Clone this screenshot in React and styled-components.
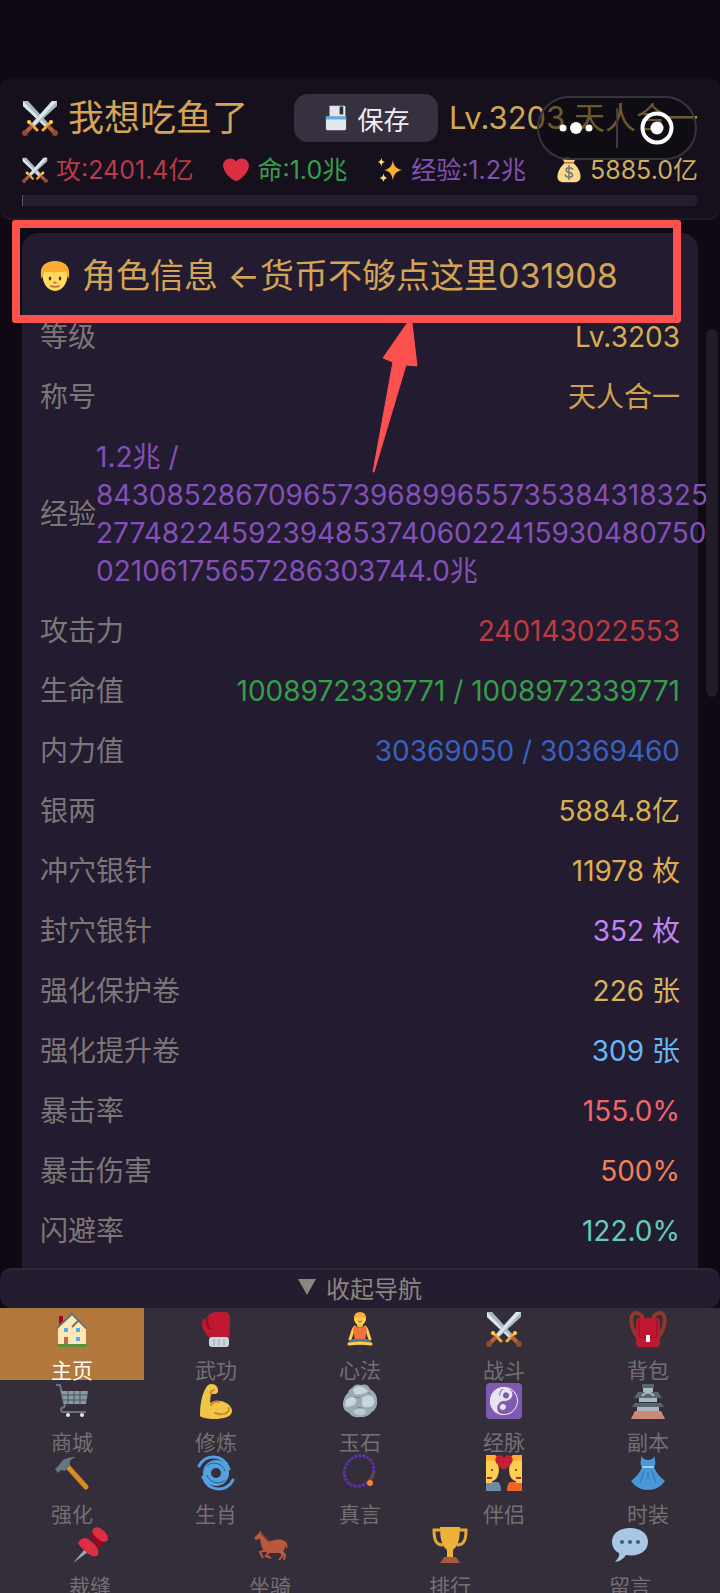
import React from 'react';
import styled, { createGlobalStyle } from 'styled-components';

const GlobalStyle = createGlobalStyle`
  * {
    box-sizing: border-box;
  }

  body {
    margin: 0;
    background: #0f0913;
    font-family: Inter, 'Noto Sans CJK SC', sans-serif;
    font-weight: 400;
  }

  h1, h2, p, dl, dd, dt {
    margin: 0;
    font-weight: 400;
  }

  button {
    font-family: inherit;
    border: none;
    padding: 0;
    cursor: pointer;
  }
`;

const Swords = () => (
  <>
    <path d="M1 1h5l21 23-3 3L1 6z" fill="#a9bac5" />
    <path d="M1 1l24 25-2 1L1 6z" fill="#dce6ec" />
    <path d="M35 1h-5L9 24l3 3L35 6z" fill="#a9bac5" />
    <path d="M35 1L12 26l-2-2L30 1z" fill="#dce6ec" />
    <path d="M7 22l8 8M29 22L21 30" stroke="#f2a93b" strokeWidth="3" strokeLinecap="round" />
    <path d="M10 26l-6 6M26 26l6 6" stroke="#b5603b" strokeWidth="4" />
    <circle cx="3" cy="33" r="3" fill="#8f4a32" />
    <circle cx="33" cy="33" r="3" fill="#8f4a32" />
    <circle cx="7" cy="22" r="2" fill="#ffcc4d" />
    <circle cx="29" cy="22" r="2" fill="#ffcc4d" />
  </>
);

const Heart = () => (
  <path
    d="M35.9 11.8C35.9 6.4 31.5 2 26 2c-3.300 0-6.200 1.600-8 4.100C16.200 3.600 13.200 2 9.900 2 4.500 2 .1 6.400.1 11.800c0 .8.1 1.500.3 2.200C1.800 22.300 11 31.200 18 33.700c7-2.500 16.200-11.400 17.600-19.600.2-.8.3-1.500.3-2.300z"
    fill="#dd2e44"
  />
);

const Sparkles = () => (
  <>
    <path d="M22 4c1 8 4 12 13 14-9 2-12 6-13 15-1-9-4-13-12-15 8-2 11-6 12-14z" fill="#ffac33" />
    <path d="M6 1c.6 4 2 5 5 6-3 1-4.400 2-5 6-.6-4-2-5-5-6 3-1 4.400-2 5-6z" fill="#ffd983" />
    <path d="M9 22c.7 5 2 6 6 7-4 1-5.300 2-6 6-.7-4-2-5-6-6 4-1 5.300-2 6-7z" fill="#ffd983" />
  </>
);

const MoneyBag = () => (
  <>
    <path d="M12 8C7 13 2 20 2 27c0 6 4 8 9 8h14c5 0 9-2 9-8 0-7-5-14-10-19z" fill="#fdd888" />
    <path d="M9 1c3 2 5-1 9 0s6 1 9 0c1 2-2 5-3 7H12C11 5 8 3 9 1z" fill="#fdd888" />
    <path d="M11 8h14" stroke="#bf6952" strokeWidth="2" />
    <path
      d="M23 17c-1-3-9-3-9 1 0 5 9 2 9 7 0 4-9 4-10 0M18 12v19"
      fill="none"
      stroke="#67757f"
      strokeWidth="2"
      strokeLinecap="round"
    />
  </>
);

const Floppy = () => (
  <>
    <path d="M9 1h20a2 2 0 012 2v13H9z" fill="#e1e8ed" />
    <path d="M23 2h5v11h-5z" fill="#292f33" />
    <path d="M4 16h28v17a2 2 0 01-2 2H6a2 2 0 01-2-2z" fill="#e1e8ed" />
    <path d="M4 16h28v4H4z" fill="#5aa9e8" />
  </>
);

const Face = () => (
  <>
    <path d="M3 16c0 11 6 20 15 20s15-9 15-20S27 4 18 4 3 5 3 16z" fill="#ffdc5d" />
    <path d="M18 0C7 0 1 6 1 14c0 3 0 5 1 7 2-2 1-6 4-8 9 1 19 1 24-1 3 2 2 6 4 9 1-2 1-4 1-7C35 6 29 0 18 0z" fill="#ffac33" />
    <ellipse cx="12" cy="21" rx="1.500" ry="2.500" fill="#662113" />
    <ellipse cx="24" cy="21" rx="1.500" ry="2.500" fill="#662113" />
    <path d="M17 26h2M13 30q5 2 10 0" fill="none" stroke="#c1694f" strokeWidth="2" strokeLinecap="round" />
  </>
);

const House = () => (
  <>
    <path d="M5 5h4v9H5z" fill="#a0041e" />
    <path d="M4 16L18 3l14 13v17H4z" fill="#ffe8b6" />
    <path d="M3 17L18 3l14 14" fill="none" stroke="#66757f" strokeWidth="2" strokeLinecap="round" />
    <path d="M18 16l7-7" stroke="#66757f" strokeWidth="2" />
    <path d="M10 17h4v4h-4zM22 17h4v4h-4zM22 26h4v4h-4z" fill="#55acee" />
    <path d="M10 26h4v7h-4z" fill="#c1694f" />
    <path d="M3 33h30v3H3z" fill="#5c913b" />
  </>
);

const Glove = () => (
  <>
    <path d="M9 8C10 3 14 1 19 1h8c4 0 5 3 5 8 0 8 0 13-1 18H12C7 22 4 19 4 12c0-3 2-5 5-4z" fill="#be1931" />
    <path d="M9 8c0 7 1 10 4 10" fill="none" stroke="#8f0c24" strokeWidth="2" />
    <rect x="11" y="26" width="20" height="10" rx="3" fill="#ccd6dd" />
    <path d="M16 28v7M21 28v7M26 28v7" stroke="#99aab5" />
  </>
);

const Lotus = () => (
  <>
    <path d="M13 16c-3 3-3 8-5 12M23 16c3 3 3 8 5 12" fill="none" stroke="#ffcc4d" strokeWidth="3" strokeLinecap="round" />
    <path d="M12 15q6 3 12 0l1 4-2 10H13l-2-10z" fill="#f4713c" />
    <path d="M11 28h14l5 3-6 3H12l-6-3z" fill="#4f789b" />
    <path d="M7 33l11-1 11 1" fill="none" stroke="#ffcc4d" strokeWidth="3" strokeLinecap="round" />
    <path d="M15 12h6v3q-3 3-6 0z" fill="#f2b93f" />
    <circle cx="18" cy="8" r="6" fill="#ffcc4d" />
    <path d="M12 7q0-6 6-6t6 6q-6-3-12 0z" fill="#ffac33" />
    <path d="M16 10q2 2 4 0" fill="none" stroke="#9c5431" />
  </>
);

const Backpack = () => (
  <>
    <path d="M7 25C0 16-1 2 6 2c4 0 6 2 7 6M29 25c7-9 8-23 1-23-4 0-6 2-7 6" fill="none" stroke="#8d3a2a" strokeWidth="4" />
    <rect x="6" y="7" width="24" height="29" rx="4" fill="#be1931" />
    <path d="M9 8v15q0 4 4 4h10q4 0 4-4V8" fill="none" stroke="#8d0c24" strokeWidth="1" />
    <rect x="16" y="24" width="4" height="7" fill="#f2f5f7" />
  </>
);

const Cart = () => (
  <>
    <path d="M2 2h4l5 22M11 24c-5 0-5 5-2 5h23" fill="none" stroke="#66757f" strokeWidth="2" />
    <path d="M7 8h27l-2 13H10z" fill="#8899a6" />
    <path d="M8 12h25M9 17h24M14 8v14M20 8v14M26 8v14" stroke="#4a525a" strokeWidth="1" />
    <circle cx="14" cy="32" r="2" fill="#e1e8ed" />
    <circle cx="28" cy="32" r="2" fill="#e1e8ed" />
  </>
);

const Muscle = () => (
  <>
    <path d="M10 2c5-3 11 1 10 7-1 2-5 3-7 1l-1 10c10-6 22 1 22 8 0 6-9 8-18 8-6 0-12-1-14-3 0-12 2-24 8-31z" fill="#efc648" />
    <path d="M16 7c-2 0-4 2-3 4M13 22c2-3 5-4 8-3M31 25c0 7-8 7-14 5" fill="none" stroke="#d08a2c" strokeWidth="2" strokeLinecap="round" />
  </>
);

const Rock = () => (
  <>
    <path d="M10 5q3-5 9-3 7-2 9 4 7 4 7 11 1 8-5 12-5 6-12 5-8 1-11-4-7-3-6-10 1-7 5-10 1-4 4-5z" fill="#9aabb5" />
    <path d="M11 6q4-4 9-2t6 4q-4 4-9 3-5 3-6-5zM4 17q5-5 9-2 3 3-1 7-6 3-9 1zM20 15q6-5 11-1 3 5-1 9-7 3-10-1z" fill="#c9d5db" />
    <path d="M11 28q6-4 12-1 3 3-3 5-6 1-9-4z" fill="#bccad2" />
    <path d="M12 14l6 1M15 24l5 1M26 9l3 3" stroke="#71838e" />
  </>
);

const YinYang = () => (
  <>
    <rect width="36" height="36" rx="4" fill="#7e5bb0" />
    <g transform="rotate(20 18 18)">
      <circle cx="18" cy="18" r="13" fill="none" stroke="#e8e4ee" strokeWidth="2" />
      <path d="M18 4a14 14 0 000 28 7 7 0 000-14 7 7 0 010-14z" fill="#e8e4ee" />
      <path d="M18 4a7 7 0 010 14 7 7 0 000 14 14 14 0 01-6-1q-4-14 6-27z" fill="#e8e4ee" />
      <path d="M18 18a7 7 0 000 13 13 13 0 0013-13 13 13 0 00-13-13 7 7 0 010 13z" fill="#7e5bb0" />
      <circle cx="18" cy="11" r="6" fill="#e8e4ee" />
      <circle cx="18" cy="12" r="3" fill="#7e5bb0" />
      <circle cx="19" cy="24" r="3" fill="#e8e4ee" />
    </g>
  </>
);

const Castle = () => (
  <>
    <path d="M5 28h26l4 8H1z" fill="#c98a7a" />
    <path d="M7 22h22v6H7zM9 13h18v6H9zM13 5h10v5H13z" fill="#a9b8c2" />
    <path d="M12 1h12v4H12zM8 9h20l4 6H4zM5 20h26l3 4H2z" fill="#57666f" />
    <path d="M12 13q6-7 12 0" fill="none" stroke="#a9b8c2" strokeWidth="2" />
  </>
);

const Hammer = () => (
  <>
    <path d="M14 12l18 20" stroke="#d98a20" strokeWidth="5" strokeLinecap="round" />
    <path d="M1 14L6 9c2-5 8-7 16-7-5 2-7 4-6 8l-5 6-4-1-3 3z" fill="#66757f" />
  </>
);

const Cyclone = () => (
  <>
    <circle cx="18" cy="18" r="9" fill="none" stroke="#55a0df" strokeWidth="8" />
    <path d="M1 11C7-1 25-2 31 14M35 25C29 37 11 38 5 22" fill="none" stroke="#55a0df" strokeWidth="3" strokeLinecap="round" />
    <path d="M9 11c6-6 16-2 18 5M27 25c-6 6-16 2-18-5" fill="none" stroke="#275f91" />
  </>
);

const Beads = () => (
  <>
    <ellipse cx="17" cy="16" rx="14" ry="16" fill="none" stroke="#5b349c" strokeWidth="3" strokeDasharray="3 1" transform="rotate(35 17 16)" />
    <circle cx="28" cy="28" r="3" fill="#f08a2c" />
    <path d="M32 16l-2 8" stroke="#74492f" strokeWidth="2" />
  </>
);

const Couple = () => (
  <>
    <path d="M0 27h12q3 2 3 9H0z" fill="#6f8ba6" />
    <path d="M36 27H24q-3 2-3 9h15z" fill="#f0632f" />
    <path d="M0 5h9c6 4 5 20-3 21v2H0zM36 5h-9c-6 4-5 20 3 21v2h6z" fill="#ffcf4f" />
    <path d="M0 0h9c4 2 5 6 4 10C9 5 4 5 0 6zM36 0h-9c-4 2-5 6-4 10 4-5 9-5 13-4z" fill="#ffac33" />
    <circle cx="6" cy="15" r="1" fill="#662113" />
    <circle cx="30" cy="15" r="1" fill="#662113" />
    <path d="M1 23h5M30 23h5" stroke="#be1931" strokeWidth="2" />
    <path d="M18 15C11 11 8 6 10 2c2-3 7-2 8 1 1-3 6-4 8-1 2 4-1 9-8 13z" fill="#c41f35" />
  </>
);

const Dress = () => (
  <>
    <path d="M11 1l3 3q4 2 8 0l3-3c-1 4 2 7-1 11 2 6 6 10 11 14-8 12-26 12-34 0 5-4 9-8 11-14-3-4 0-7-1-11z" fill="#4a96d8" />
    <path d="M12 12h12" stroke="#9bcdf4" strokeWidth="2" />
    <path d="M14 16l-4 12M18 17v7M22 16l4 12" stroke="#2f74b2" />
  </>
);

const Pushpin = () => (
  <>
    <path d="M13 22l3 3L1 36z" fill="#99aab5" />
    <path d="M18 8l9-4 6 8-6 10z" fill="#a0041e" />
    <path d="M7 14c4-4 8-4 12 0s9 8 7 14c-3 3-8 1-13-4S5 17 7 14z" fill="#dd2e44" />
    <path d="M21 2c3-3 7-2 11 2s5 8 3 10c-3 2-7 0-10-3s-6-6-4-9z" fill="#dd2e44" />
  </>
);

const Horse = () => (
  <>
    <path d="M2 11L7 6l1-2 2 2c3 3 5 8 8 8 5-1 9-2 12-1 5 1 6 4 5 9l-2-3c0 5-3 6-4 7H15c-5-3-6-8-7-14l-4 1z" fill="#b8583f" />
    <path d="M14 23l-6 2 3 6M17 25l-3 4 5 2M27 24l4 4-4 5M29 23l4 5-1 5" fill="none" stroke="#b8583f" strokeWidth="2" />
    <path d="M9 6c4 3 5 7 9 8" fill="none" stroke="#783426" strokeWidth="2" />
  </>
);

const Trophy = () => (
  <>
    <path d="M8 3H2c0 10 2 15 9 15M28 3h6c0 10-2 15-9 15" fill="none" stroke="#e4a92f" strokeWidth="3" />
    <path d="M8 0h20c0 12-2 19-7 23v7h-6v-7C10 19 8 12 8 0z" fill="#edb23a" />
    <path d="M12 30h12l4 6H8z" fill="#a65a42" />
  </>
);

const Bubble = () => (
  <>
    <path d="M18 1C8 1 0 6 0 15c0 5 3 9 7 11 1 4-2 6-4 9 6-1 9-4 11-7 13 2 22-4 22-13S28 1 18 1z" fill="#a9c6e3" />
    <circle cx="10" cy="15" r="2" fill="#2d6288" />
    <circle cx="18" cy="15" r="2" fill="#2d6288" />
    <circle cx="26" cy="15" r="2" fill="#2d6288" />
  </>
);

const Emoji = ({ icon: Drawing, size }) => (
  <Icon viewBox="0 0 36 36" width={size} height={size} aria-hidden="true">
    <Drawing />
  </Icon>
);

const stats = [
  { icon: Swords, text: '攻:2401.4亿', color: '#b93b49' },
  { icon: Heart, text: '命:1.0兆', color: '#36a04c' },
  { icon: Sparkles, text: '经验:1.2兆', color: '#8350b4' },
  { icon: MoneyBag, text: '5885.0亿', color: '#cfae5c' },
];

const expLines = [
  '1.2兆 /',
  '843085286709657396899655735384318325',
  '277482245923948537406022415930480750',
  '02106175657286303744.0兆',
];

const infos = [
  { label: '等级', value: 'Lv.3203', color: '#d6b04f' },
  { label: '称号', value: '天人合一', color: '#d3a050' },
  { label: '经验', lines: expLines, color: '#8350b8' },
  { label: '攻击力', value: '240143022553', color: '#bb3d43' },
  { label: '生命值', value: '1008972339771 / 1008972339771', color: '#369e48' },
  { label: '内力值', value: '30369050 / 30369460', color: '#3a62bd' },
  { label: '银两', value: '5884.8亿', color: '#d6b04f' },
  { label: '冲穴银针', value: '11978 枚', color: '#dcae50' },
  { label: '封穴银针', value: '352 枚', color: '#bd85f5' },
  { label: '强化保护卷', value: '226 张', color: '#d8b45a' },
  { label: '强化提升卷', value: '309 张', color: '#66b8f4' },
  { label: '暴击率', value: '155.0%', color: '#f0656b' },
  { label: '暴击伤害', value: '500%', color: '#f27f56' },
  { label: '闪避率', value: '122.0%', color: '#64cdb8' },
];

const navItems = [
  { icon: House, label: '主页' },
  { icon: Glove, label: '武功' },
  { icon: Lotus, label: '心法' },
  { icon: Swords, label: '战斗' },
  { icon: Backpack, label: '背包' },
  { icon: Cart, label: '商城' },
  { icon: Muscle, label: '修炼' },
  { icon: Rock, label: '玉石' },
  { icon: YinYang, label: '经脉' },
  { icon: Castle, label: '副本' },
  { icon: Hammer, label: '强化' },
  { icon: Cyclone, label: '生肖' },
  { icon: Beads, label: '真言' },
  { icon: Couple, label: '伴侣' },
  { icon: Dress, label: '时装' },
  { icon: Pushpin, label: '裁缝' },
  { icon: Horse, label: '坐骑' },
  { icon: Trophy, label: '排行' },
  { icon: Bubble, label: '留言' },
];

const App = () => {
  return (
    <Page>
      <GlobalStyle />
      <Header>
        <TopRow>
          <Name>
            <Emoji icon={Swords} size={36} />
            我想吃鱼了
          </Name>
          <Save type="button">
            <Emoji icon={Floppy} size={26} />
            保存
          </Save>
          <Level>Lv.3203 天人合一</Level>
        </TopRow>
        <Stats>
          {stats.map(({ icon, text, color }) => (
            <Stat key={text} $color={color}>
              <Emoji icon={icon} size={26} />
              {text}
            </Stat>
          ))}
        </Stats>
        <Progress />
        <Capsule>
          <svg width="156" height="60" viewBox="0 0 156 60" fill="#fff">
            <circle cx="24" cy="30" r="3.500" />
            <circle cx="37" cy="30" r="6" />
            <circle cx="50" cy="30" r="3.500" />
            <path d="M78 10v40" stroke="#3d3a43" strokeWidth="2" />
            <circle cx="118" cy="30" r="14.500" fill="none" stroke="#fff" strokeWidth="4" />
            <circle cx="118" cy="30" r="6.500" />
          </svg>
        </Capsule>
      </Header>

      <Main>
        <Panel>
          <PanelTitle>
            <Emoji icon={Face} size={30} />
            角色信息 ←货币不够点这里031908
          </PanelTitle>
          <dl>
            {infos.map(({ label, value, lines, color }) => (
              <InfoRow key={label}>
                <Label>{label}</Label>
                <Value $color={color}>
                  {lines ? lines.map((line) => <p key={line}>{line}</p>) : value}
                </Value>
              </InfoRow>
            ))}
          </dl>
        </Panel>
        <ScrollThumb />
        <Marker />
        <Arrow width="36" height="152" viewBox="0 0 36 152">
          <path
            d="M25 2Q28-1 29 3L34 46l-11-1L-9 152h-1L10 42 0 38z"
            fill="#fd5150"
            stroke="#fd5150"
            strokeLinejoin="round"
          />
        </Arrow>
      </Main>

      <Toggle type="button">
        <svg width="18" height="16" viewBox="0 0 18 16" aria-hidden="true">
          <path d="M0 0h18L9 16z" fill="#8d857f" />
        </svg>
        收起导航
      </Toggle>
      <Nav>
        {navItems.map(({ icon, label }, index) => (
          <NavItem key={label} href="#" $active={index === 0}>
            <Emoji icon={icon} size={36} />
            <span>{label}</span>
          </NavItem>
        ))}
      </Nav>
    </Page>
  );
};

export default App;

const Icon = styled.svg`
  display: block;
  flex-shrink: 0;
  overflow: visible;
`;

const Page = styled.div`
  height: 100vh;
  padding-top: 78px;
  display: flex;
  flex-direction: column;
  overflow: hidden;
  background: #0f0913;
`;

const Header = styled.header`
  position: relative;
  flex-shrink: 0;
  padding: 16px 22px 12px;
  background: #15101b;
  border-bottom: 2px solid #211c25;
  border-radius: 12px;
`;

const TopRow = styled.div`
  display: flex;
  align-items: center;
  justify-content: space-between;
  white-space: nowrap;
`;

const Name = styled.h1`
  display: flex;
  align-items: center;
  gap: 10px;
  font-size: 36px;
  line-height: 48px;
  color: #d3a455;
`;

const Save = styled.button`
  display: flex;
  align-items: center;
  justify-content: center;
  gap: 8px;
  width: 144px;
  height: 48px;
  margin-left: 36px;
  border-radius: 14px;
  background: #37303e;
  color: #f1eef3;
  font-size: 26px;
`;

const Level = styled.span`
  font-size: 31px;
  line-height: 48px;
  color: #cfa84f;
`;

const Stats = styled.div`
  display: flex;
  justify-content: space-between;
  margin-top: 10px;
  white-space: nowrap;
`;

const Stat = styled.span`
  display: flex;
  align-items: center;
  gap: 8px;
  font-size: 25px;
  line-height: 36px;
  color: ${(props) => props.$color};
`;

const Progress = styled.div`
  height: 11px;
  margin-top: 7px;
  border-left: 1px solid #5d5663;
  border-radius: 0 6px 6px 0;
  background: #241d2f;
`;

const Capsule = styled.div`
  position: absolute;
  top: 18px;
  right: 23px;
  display: flex;
  border: 2px solid #37343d;
  border-radius: 32px;
  background: rgba(10, 8, 14, 0.5);
`;

const Main = styled.main`
  position: relative;
  flex: 1;
  min-height: 0;
  padding: 13px 22px 0;
  overflow: hidden;
`;

const Panel = styled.section`
  padding: 20px 18px 40px;
  border-radius: 16px;
  background: #231b2f;
`;

const PanelTitle = styled.h2`
  display: flex;
  align-items: center;
  gap: 12px;
  margin-bottom: 8px;
  font-size: 34px;
  line-height: 46px;
  white-space: nowrap;
  color: #d3a455;
`;

const InfoRow = styled.div`
  display: flex;
  align-items: center;
  justify-content: space-between;
  padding: 11px 0;
  font-size: 28px;
  line-height: 38px;
  white-space: nowrap;
`;

const Label = styled.dt`
  flex-shrink: 0;
  color: #7d7677;
`;

const Value = styled.dd`
  color: ${(props) => props.$color};
`;

const ScrollThumb = styled.div`
  position: absolute;
  top: 109px;
  right: 2px;
  width: 12px;
  height: 368px;
  border-radius: 6px;
  background: #211c28;
`;

const Marker = styled.div`
  position: absolute;
  top: 0;
  left: 12px;
  right: 39px;
  height: 103px;
  border: 8px solid #fd5150;
  border-radius: 3px;
`;

const Arrow = styled.svg`
  position: absolute;
  top: 100px;
  left: 383px;
  overflow: visible;
`;

const Toggle = styled.button`
  display: flex;
  flex-shrink: 0;
  align-items: center;
  justify-content: center;
  gap: 10px;
  height: 40px;
  padding-bottom: 4px;
  border-top: 2px solid #2e2735;
  border-radius: 12px;
  background: #241d2f;
  color: #8d857f;
  font-size: 24px;
`;

const Nav = styled.nav`
  display: flex;
  flex-shrink: 0;
  flex-wrap: wrap;
  margin-bottom: -3px;
  background: #342d3a;
`;

const NavItem = styled.a`
  display: flex;
  flex: 1 0 20%;
  flex-direction: column;
  align-items: center;
  gap: 13px;
  height: 72px;
  padding-top: 3px;
  text-decoration: none;
  font-size: 21px;
  line-height: 22px;
  background: ${(props) => (props.$active ? '#b3783c' : 'transparent')};
  color: ${(props) => (props.$active ? '#ffffff' : '#766f72')};
`;
